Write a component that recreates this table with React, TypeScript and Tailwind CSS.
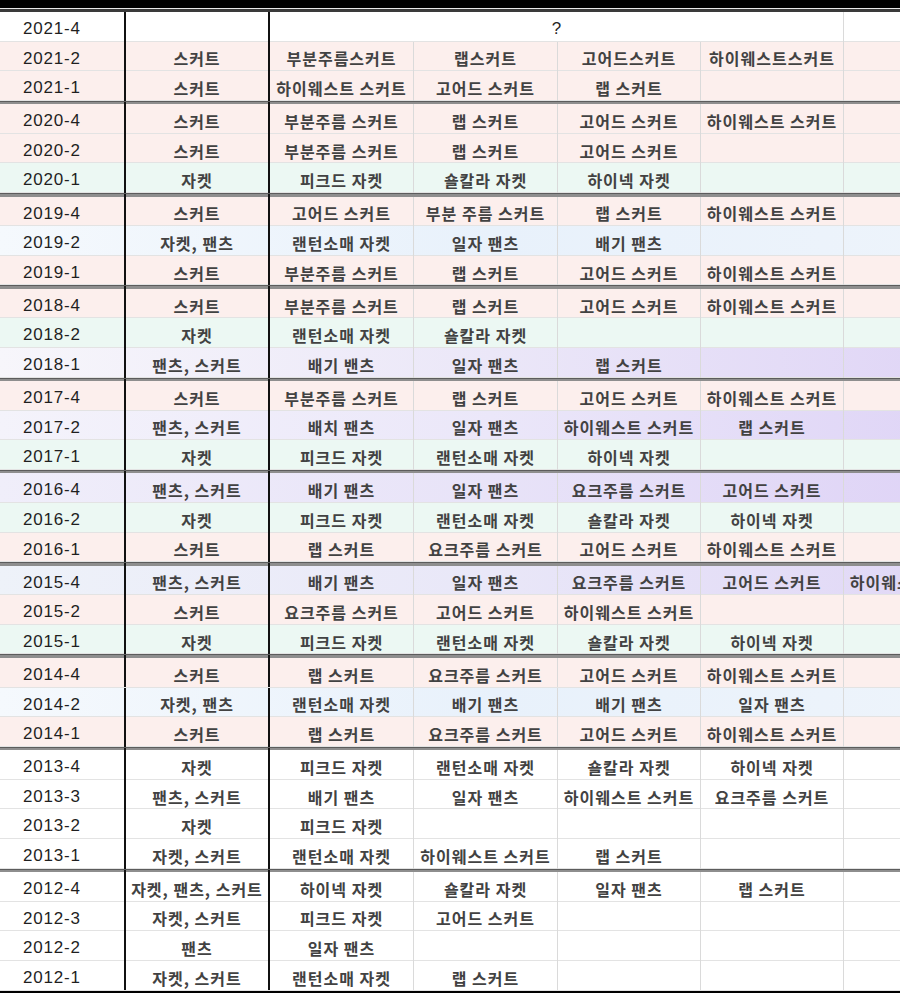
import React from "react"

type Tone = "white" | "pink" | "green" | "blue" | "lav1" | "lav2" | "lav3" | "lav4"

interface Row {
  year: string
  cells: string[]
  tone: Tone
}

const toneClass: Record<Tone, string> = {
  white: "bg-white",
  pink: "bg-[#fcefed]",
  green: "bg-[#ecf8f3]",
  blue: "bg-linear-to-r from-[#f5f9fd] via-[#e8f1fb] to-[#eef4fb]",
  lav1: "bg-linear-to-r from-[#f7f6fb] via-[#ebe7f8] to-[#dfd4f6]",
  lav2: "bg-linear-to-r from-[#f4f3fb] via-[#ebe7f9] to-[#ded3f6]",
  lav3: "bg-linear-to-r from-[#f0eefa] via-[#e8e3f8] to-[#ded2f6]",
  lav4: "bg-linear-to-r from-[#eef2f9] via-[#e9e7f8] to-[#e0d6f6]",
}

const groups: Row[][] = [
  [
    { year: "2021-2", cells: ["스커트", "부분주름스커트", "랩스커트", "고어드스커트", "하이웨스트스커트", ""], tone: "pink" },
    { year: "2021-1", cells: ["스커트", "하이웨스트 스커트", "고어드 스커트", "랩 스커트", "", ""], tone: "pink" },
  ],
  [
    { year: "2020-4", cells: ["스커트", "부분주름 스커트", "랩 스커트", "고어드 스커트", "하이웨스트 스커트", ""], tone: "pink" },
    { year: "2020-2", cells: ["스커트", "부분주름 스커트", "랩 스커트", "고어드 스커트", "", ""], tone: "pink" },
    { year: "2020-1", cells: ["자켓", "피크드 자켓", "숄칼라 자켓", "하이넥 자켓", "", ""], tone: "green" },
  ],
  [
    { year: "2019-4", cells: ["스커트", "고어드 스커트", "부분 주름 스커트", "랩 스커트", "하이웨스트 스커트", ""], tone: "pink" },
    { year: "2019-2", cells: ["자켓, 팬츠", "랜턴소매 자켓", "일자 팬츠", "배기 팬츠", "", ""], tone: "blue" },
    { year: "2019-1", cells: ["스커트", "부분주름 스커트", "랩 스커트", "고어드 스커트", "하이웨스트 스커트", ""], tone: "pink" },
  ],
  [
    { year: "2018-4", cells: ["스커트", "부분주름 스커트", "랩 스커트", "고어드 스커트", "하이웨스트 스커트", ""], tone: "pink" },
    { year: "2018-2", cells: ["자켓", "랜턴소매 자켓", "숄칼라 자켓", "", "", ""], tone: "green" },
    { year: "2018-1", cells: ["팬츠, 스커트", "배기 밴츠", "일자  팬츠", "랩 스커트", "", ""], tone: "lav1" },
  ],
  [
    { year: "2017-4", cells: ["스커트", "부분주름 스커트", "랩 스커트", "고어드 스커트", "하이웨스트 스커트", ""], tone: "pink" },
    { year: "2017-2", cells: ["팬츠, 스커트", "배치 팬츠", "일자 팬츠", "하이웨스트 스커트", "랩 스커트", ""], tone: "lav2" },
    { year: "2017-1", cells: ["자켓", "피크드 자켓", "랜턴소매 자켓", "하이넥 자켓", "", ""], tone: "green" },
  ],
  [
    { year: "2016-4", cells: ["팬츠, 스커트", "배기 팬츠", "일자 팬츠", "요크주름 스커트", "고어드 스커트", ""], tone: "lav3" },
    { year: "2016-2", cells: ["자켓", "피크드 자켓", "랜턴소매 자켓", "숄칼라 자켓", "하이넥 자켓", ""], tone: "green" },
    { year: "2016-1", cells: ["스커트", "랩 스커트", "요크주름 스커트", "고어드 스커트", "하이웨스트 스커트", ""], tone: "pink" },
  ],
  [
    { year: "2015-4", cells: ["팬츠, 스커트", "배기 팬츠", "일자 팬츠", "요크주름 스커트", "고어드 스커트", "하이웨스트 스커트"], tone: "lav4" },
    { year: "2015-2", cells: ["스커트", "요크주름 스커트", "고어드 스커트", "하이웨스트 스커트", "", ""], tone: "pink" },
    { year: "2015-1", cells: ["자켓", "피크드 자켓", "랜턴소매 자켓", "숄칼라 자켓", "하이넥 자켓", ""], tone: "green" },
  ],
  [
    { year: "2014-4", cells: ["스커트", "랩 스커트", "요크주름 스커트", "고어드 스커트", "하이웨스트 스커트", ""], tone: "pink" },
    { year: "2014-2", cells: ["자켓, 팬츠", "랜턴소매 자켓", "배기 팬츠", "배기 팬츠", "일자 팬츠", ""], tone: "blue" },
    { year: "2014-1", cells: ["스커트", "랩 스커트", "요크주름 스커트", "고어드 스커트", "하이웨스트 스커트", ""], tone: "pink" },
  ],
  [
    { year: "2013-4", cells: ["자켓", "피크드 자켓", "랜턴소매 자켓", "숄칼라 자켓", "하이넥 자켓", ""], tone: "white" },
    { year: "2013-3", cells: ["팬츠, 스커트", "배기 팬츠", "일자 팬츠", "하이웨스트 스커트", "요크주름 스커트", ""], tone: "white" },
    { year: "2013-2", cells: ["자켓", "피크드 자켓", "", "", "", ""], tone: "white" },
    { year: "2013-1", cells: ["자켓, 스커트", "랜턴소매 자켓", "하이웨스트 스커트", "랩 스커트", "", ""], tone: "white" },
  ],
  [
    { year: "2012-4", cells: ["자켓, 팬츠, 스커트", "하이넥 자켓", "숄칼라 자켓", "일자 팬츠", "랩 스커트", ""], tone: "white" },
    { year: "2012-3", cells: ["자켓, 스커트", "피크드 자켓", "고어드 스커트", "", "", ""], tone: "white" },
    { year: "2012-2", cells: ["팬츠", "일자 팬츠", "", "", "", ""], tone: "white" },
    { year: "2012-1", cells: ["자켓, 스커트", "랜턴소매 자켓", "랩 스커트", "", "", ""], tone: "white" },
  ],
]

const gridCols = "grid grid-cols-[126px_144px_144px_144px_143px_143px_143px]"
const yearFont = { fontFamily: '"Liberation Sans", Arial, sans-serif' }
const koFont = { fontFamily: '"Noto Sans CJK KR", "Noto Sans", sans-serif' }

const thick = "border-r-2 border-r-[#111]"
const thin = "border-r border-r-[#dadada]"

function YearCell({ year }: { year: string }) {
  return (
    <div className={`flex items-center pl-[23px] pt-[4px] ${thick} text-[17px] tracking-[0.8px] text-[#1f1f1f]`} style={yearFont}>
      {year}
    </div>
  )
}

function TextCell({ text, idx }: { text: string; idx: number }) {
  return (
    <div
      className={`flex items-center justify-center pt-[4px] whitespace-nowrap text-[16px] font-bold tracking-[1px] text-[#424242] ${idx === 0 ? thick : thin}`}
      style={koFont}
    >
      {text}
    </div>
  )
}

function DataRow({ row }: { row: Row }) {
  return (
    <div className={`${gridCols} h-[29.6px] border-b border-b-[#e3e3e3] ${toneClass[row.tone]}`}>
      <YearCell year={row.year} />
      {row.cells.map((c, i) => (
        <TextCell key={i} text={c} idx={i} />
      ))}
    </div>
  )
}

function Separator() {
  return (
    <div className={`${gridCols} h-[3.5px] bg-[#8e8e8e] border-t border-t-[#5c5c5c]`}>
      <div className={thick} />
      <div className={thick} />
      <div />
      <div />
      <div />
      <div />
      <div />
    </div>
  )
}

export default function App() {
  return (
    <div className="w-[900px] h-[993px] overflow-hidden bg-black">
      <div className="h-[8px] bg-black" />
      <div className="h-[1px] bg-[#e8e8e8]" />
      <div className="h-[3px] bg-[#3a3a3a]" />
      <div className="w-[987px] bg-white">
        {/* header row */}
        <div className={`${gridCols} h-[29.6px] border-b border-b-[#e3e3e3] bg-white`}>
          <YearCell year="2021-4" />
          <div className={thick} />
          <div className={`col-span-4 flex items-center justify-center pt-[4px] text-[17px] text-[#262626] ${thin}`} style={yearFont}>
            ?
          </div>
          <div />
        </div>
        {groups.map((g, gi) => (
          <React.Fragment key={gi}>
            {gi > 0 && <Separator />}
            {g.map((r) => (
              <DataRow key={r.year} row={r} />
            ))}
          </React.Fragment>
        ))}
      </div>
    </div>
  )
}
